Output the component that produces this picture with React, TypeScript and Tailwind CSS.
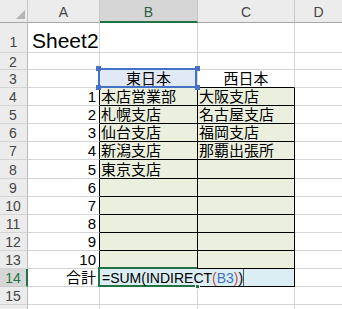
import React from 'react';

const font = "font-['Liberation_Sans','Noto_Sans_CJK_JP',sans-serif]";

const body: [number, string, string, string][] = [
  [1, '本店営業部', '大阪支店', 'h-[18px]'],
  [2, '札幌支店', '名古屋支店', 'h-[18px]'],
  [3, '仙台支店', '福岡支店', 'h-[18px]'],
  [4, '新潟支店', '那覇出張所', 'h-[18px]'],
  [5, '東京支店', '', 'h-[19px]'],
  [6, '', '', 'h-[18px]'],
  [7, '', '', 'h-[18px]'],
  [8, '', '', 'h-[18px]'],
  [9, '', '', 'h-[18px]'],
  [10, '', '', 'h-[18px]'],
];

const RowHead: React.FC<{ n: number; active?: boolean }> = ({ n, active }) => (
  <div
    className={
      active
        ? 'flex w-[28px] shrink-0 items-center justify-center border-r-2 border-b border-r-[#217346] border-b-[#c8c8c8] bg-[#d6d6d6] pt-[1px] text-[14px] leading-none text-[#217346]'
        : 'flex w-[28px] shrink-0 items-center justify-center border-r border-b border-r-[#b9b9b9] border-b-[#d4d4d4] bg-[#ececec] pt-[1px] pr-[1px] text-[14px] leading-none text-[#444]'
    }
  >
    {n}
  </div>
);

const Handle: React.FC<{ pos: string; color: string }> = ({ pos, color }) => (
  <span className={`absolute h-[5px] w-[5px] ${pos} ${color}`} />
);

export default function App() {
  return (
    <div className={`h-[309px] w-[342px] overflow-hidden bg-white ${font} text-black`}>
      {/* column headers */}
      <div className="flex h-[23px]">
        <div className="relative w-[28px] shrink-0 border-r border-b border-r-[#c6c6c6] border-b-[#a6a6a6] bg-[#ececec]">
          <svg className="absolute right-[2px] bottom-[3px]" width="9" height="9" viewBox="0 0 9 9">
            <polygon points="9,0 9,9 0,9" fill="#b5b5b5" />
          </svg>
        </div>
        <div className="flex w-[72px] shrink-0 items-end justify-center border-r border-b border-r-[#c6c6c6] border-b-[#a6a6a6] bg-[#ececec] pb-[3px] text-[14px] leading-none text-[#444]">
          A
        </div>
        <div className="flex w-[98px] shrink-0 items-end justify-center border-r border-b-2 border-r-[#c6c6c6] border-b-[#217346] bg-[#d6d6d6] pb-[2px] text-[14px] leading-none text-[#2e5e44]">
          B
        </div>
        <div className="flex w-[97px] shrink-0 items-end justify-center border-r border-b border-r-[#c6c6c6] border-b-[#a6a6a6] bg-[#ececec] pb-[3px] text-[14px] leading-none text-[#444]">
          C
        </div>
        <div className="flex flex-1 items-end justify-center border-b border-b-[#a6a6a6] bg-[#ececec] pb-[3px] text-[14px] leading-none text-[#444]">
          D
        </div>
      </div>

      {/* row 1 */}
      <div className="flex h-[30px]">
        <div className="flex w-[28px] shrink-0 items-end justify-center border-r border-b border-r-[#b9b9b9] border-b-[#d4d4d4] bg-[#ececec] pb-[3px] text-[14px] leading-none text-[#444]">
          1
        </div>
        <div className="flex w-[72px] shrink-0 items-end overflow-visible whitespace-nowrap border-r border-b border-[#d4d4d4] pb-[1px] pl-[4px] text-[21px] leading-[21px]">
          Sheet2
        </div>
        <div className="w-[98px] shrink-0 border-r border-b border-[#d4d4d4]" />
        <div className="w-[97px] shrink-0 border-r border-b border-[#d4d4d4]" />
        <div className="flex-1 border-b border-[#d4d4d4]" />
      </div>

      {/* row 2 */}
      <div className="flex h-[17px]">
        <RowHead n={2} />
        <div className="w-[72px] shrink-0 border-r border-b border-[#d4d4d4]" />
        <div className="w-[98px] shrink-0 border-r border-b border-[#d4d4d4]" />
        <div className="w-[97px] shrink-0 border-r border-b border-[#d4d4d4]" />
        <div className="flex-1 border-b border-[#d4d4d4]" />
      </div>

      {/* row 3 */}
      <div className="flex h-[18px]">
        <RowHead n={3} />
        <div className="w-[72px] shrink-0 border-r border-b border-[#d4d4d4]" />
        <div className="relative flex w-[98px] shrink-0 items-end justify-center border-r border-b border-r-[#d4d4d4] border-b-black bg-[#e1e9f6] text-[15px] leading-[17px]">
          東日本
          <div className="absolute -top-[2px] -bottom-[1px] -left-[2px] right-0 border-2 border-[#4472c4]" />
          <Handle pos="-top-[4px] -left-[4px]" color="bg-[#4472c4]" />
          <Handle pos="-top-[4px] -right-[3px]" color="bg-[#4472c4]" />
          <Handle pos="-bottom-[3px] -left-[4px]" color="bg-[#4472c4]" />
          <Handle pos="-bottom-[3px] -right-[3px]" color="bg-[#4472c4]" />
        </div>
        <div className="flex w-[97px] shrink-0 items-end justify-center border-r border-b border-r-[#d4d4d4] border-b-black text-[15px] leading-[17px]">
          西日本
        </div>
        <div className="flex-1 border-b border-[#d4d4d4]" />
      </div>

      {/* rows 4-13 */}
      {body.map(([n, b, c, h], i) => (
        <div key={n} className={`flex ${h}`}>
          <RowHead n={i + 4} />
          <div className="flex w-[72px] shrink-0 items-end justify-end border-r border-b border-r-black border-b-[#d4d4d4] pr-[3px] text-[15px] leading-[17px]">
            {n}
          </div>
          <div className="flex w-[98px] shrink-0 items-end overflow-hidden whitespace-nowrap border-r border-b border-black bg-[#ebf0de] pl-[1px] text-[15px] leading-[17px]">
            {b}
          </div>
          <div className="flex w-[97px] shrink-0 items-end overflow-hidden whitespace-nowrap border-r border-b border-black bg-[#ebf0de] pl-[1px] text-[15px] leading-[17px]">
            {c}
          </div>
          <div className="flex-1 border-b border-[#d4d4d4]" />
        </div>
      ))}

      {/* row 14 */}
      <div className="flex h-[18px]">
        <RowHead n={14} active />
        <div className="flex w-[72px] shrink-0 items-end justify-end border-r border-b border-r-black border-b-[#d4d4d4] pr-[3px] text-[15px] leading-[17px]">
          合計
        </div>
        <div className="relative flex w-[98px] shrink-0 items-end border-r border-b border-r-[#daeef3] border-b-black bg-[#daeef3]">
          <div className="absolute -top-[2px] -bottom-[1px] -left-[2px] right-0 border-t-2 border-b-2 border-l-2 border-[#217346]" />
          <div className="relative flex h-full w-[144px] shrink-0 items-end whitespace-nowrap border-r border-r-[#555] pl-[2px] text-[14px] leading-[16px]">
            =SUM(INDIRECT<span className="text-[#c0504d]">(</span>
            <span className="text-[#4472c4]">B3</span>
            <span className="text-[#c0504d]">)</span>)
          </div>
          <Handle pos="-bottom-[3px] -right-[3px] border border-white" color="bg-[#217346]" />
        </div>
        <div className="w-[97px] shrink-0 border-r border-b border-black bg-[#daeef3]" />
        <div className="flex-1 border-b border-[#d4d4d4]" />
      </div>

      {/* row 15 */}
      <div className="flex h-[18px]">
        <RowHead n={15} />
        <div className="w-[72px] shrink-0 border-r border-b border-[#d4d4d4]" />
        <div className="w-[98px] shrink-0 border-r border-b border-[#d4d4d4]" />
        <div className="w-[97px] shrink-0 border-r border-b border-[#d4d4d4]" />
        <div className="flex-1 border-b border-[#d4d4d4]" />
      </div>

      {/* row 16 (partial) */}
      <div className="flex h-[18px]">
        <div className="w-[28px] shrink-0 border-r border-r-[#b9b9b9] bg-[#ececec]" />
        <div className="w-[72px] shrink-0 border-r border-[#d4d4d4]" />
        <div className="w-[98px] shrink-0 border-r border-[#d4d4d4]" />
        <div className="w-[97px] shrink-0 border-r border-[#d4d4d4]" />
        <div className="flex-1" />
      </div>
    </div>
  );
}
